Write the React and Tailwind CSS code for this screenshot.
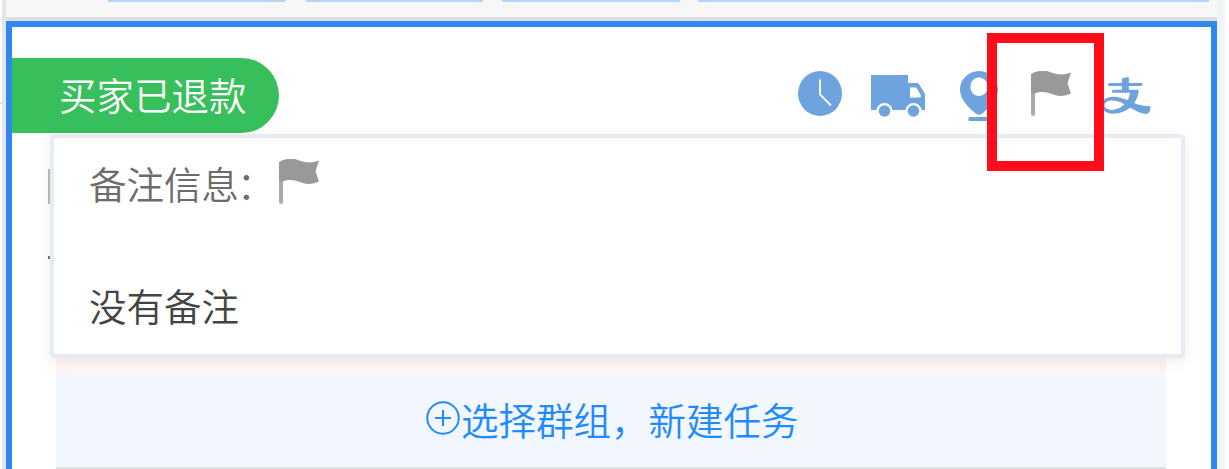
import React from 'react';
import { AiOutlineAlipay } from 'react-icons/ai';

const ClockIcon = () => (
  <svg viewBox="0 0 44 45" className="w-11 h-[45px]">
    <ellipse cx="22" cy="22.5" rx="22" ry="22.5" fill="#6fa3de" />
    <path d="M22 8.5v15l11 11" fill="none" stroke="#fff" strokeWidth="1.8" />
  </svg>
);

const TruckIcon = () => (
  <svg viewBox="0 0 54 42" className="w-[54px] h-[42px]">
    <path d="M0 0h37v8h8.5q1.500 0 2.500 1.300l5.200 8.200q.8 1.300.8 2.800V35H0z" fill="#6fa3de" />
    <path d="M39 12.500h6.500l4.200 7.700v2.300H39z" fill="#fff" />
    <path d="M5.500 36a8 8 0 0 1 16 0zM34.500 36a8 8 0 0 1 16 0z" fill="#fff" />
    <circle cx="13.500" cy="36" r="5.800" fill="#6fa3de" />
    <circle cx="42.500" cy="36" r="5.800" fill="#6fa3de" />
  </svg>
);

const PinIcon = () => (
  <svg viewBox="0 0 38 50" className="w-[38px] h-[50px]">
    <path fillRule="evenodd" d="M19 0C8.500 0 0 8.300 0 18.500 0 29 9 36.500 15 42q4 3.500 8 0C29 36.500 38 29 38 18.500 38 8.300 29.500 0 19 0zm0 6.500c5 0 8.500 4.200 8.500 9.300S24 25 19 25s-8.500-4.100-8.500-9.200S14 6.500 19 6.500z" fill="#6fa3de" />
    <rect x="8.500" y="46" width="22" height="4" rx="1" fill="#6fa3de" />
  </svg>
);

const FlagIcon = ({ className }) => (
  <svg viewBox="0 0 40 45" className={className}>
    <path d="M0 3h4v40q0 2-2 2t-2-2z" fill="#aaa" />
    <path d="M0 3Q11-3 21 1.800 31 5.500 40 1.500L36.500 12.500 40 22.500Q31 27 21 23 12 19.500 3.500 22.500L0 22z" fill="#999" />
  </svg>
);

const PlusCircle = () => (
  <svg viewBox="0 0 34 34" className="mb-0.5 w-[34px] h-[34px]" fill="none" stroke="#228aff" strokeWidth="2">
    <circle cx="17" cy="17" r="15.700" />
    <path d="M17 9v16M9 17h16" />
  </svg>
);

const RemarkPopover = () => (
  <div className="absolute left-[38px] top-[107px] w-[1135px] h-[224px] rounded-[5px] border-4 border-[#e6ecf2] bg-white pl-[35px] shadow-[0_4px_14px_rgba(0,0,0,0.07)]">
    <div className="mt-[15px] flex h-[60px] items-center text-[#6c6c6c]">
      <span className="w-[190px] whitespace-nowrap">备注信息<span className="-ml-0.5">：</span></span>
      <FlagIcon className="mb-[3px] w-10 h-[45px]" />
    </div>
    <div className="mt-[62px] flex h-[60px] items-center text-[#444]">没有备注</div>
  </div>
);

const OrderCard = () => (
  <div className="relative h-[448px] border-x-[6px] border-t-[6px] border-[#2f88f0] bg-white">
    <div className="flex h-[106px] items-start justify-between pt-[31px] pr-[57px]">
      <div className="flex h-[75px] w-[267px] items-center rounded-r-full bg-[#37bf5b] pb-1 pl-[47px] text-white">
        买家已退款
      </div>
      <div className="flex items-start pt-[13px]">
        <ClockIcon />
        <span className="ml-[29px] mt-1"><TruckIcon /></span>
        <span className="ml-[35px]"><PinIcon /></span>
        <FlagIcon className="ml-[33px] w-10 h-[45px]" />
        <AiOutlineAlipay preserveAspectRatio="none" className="ml-[27px] w-14 h-[49px] text-[#6fa3de]" />
      </div>
    </div>

    <div className="h-[225px] pl-9 pt-9">
      <div className="h-[35px] w-4 border-l-[3px] border-[#bbb]" />
      <div className="mt-[52px] h-[3px] w-2 bg-[#777]" />
    </div>

    <div className="ml-11 w-[1110px]">
      <div className="h-4 bg-[#fff5f5]" />
      <div className="flex h-[93px] items-center bg-[#f2f7ff] pb-[3px] pl-[370px] text-[#228aff]">
        <PlusCircle />
        <span className="ml-px whitespace-nowrap">选择群组，新建任务</span>
      </div>
      <div className="h-0.5 bg-[#e0e0e0]" />
    </div>

    <RemarkPopover />
    {/* highlight frame around the flag */}
    <div className="absolute left-[975px] top-[6px] h-[138px] w-[117px] border-[10.5px] border-[#ff0d1b]" />
  </div>
);

export default function App() {
  return (
    <div className="flex h-[469px] w-[1229px] overflow-hidden border-r-4 border-white bg-[#f1f5f9] text-[37.5px] leading-none font-[350] [font-family:'Noto_Sans_CJK_SC',sans-serif]">
      <div className="w-[6px] border-r-4 border-[#e5e5e5] bg-white">
        <div className="mt-[102px] h-0.5 bg-[#e0e0e0]" />
      </div>
      <div className="w-[1211px]">
        <div className="flex h-[21px] border-b-4 border-[#e0e0e0] bg-[#f7f7f7] pl-[102px]">
          <div className="h-0.5 w-[177px] bg-[#b1d6fe]" />
          <div className="ml-[21px] h-0.5 w-[177px] bg-[#b1d6fe]" />
          <div className="ml-[19px] h-0.5 w-[178px] bg-[#b1d6fe]" />
          <div className="ml-[18px] h-0.5 w-[511px] bg-[#b1d6fe]" />
        </div>
        <OrderCard />
      </div>
    </div>
  );
}
